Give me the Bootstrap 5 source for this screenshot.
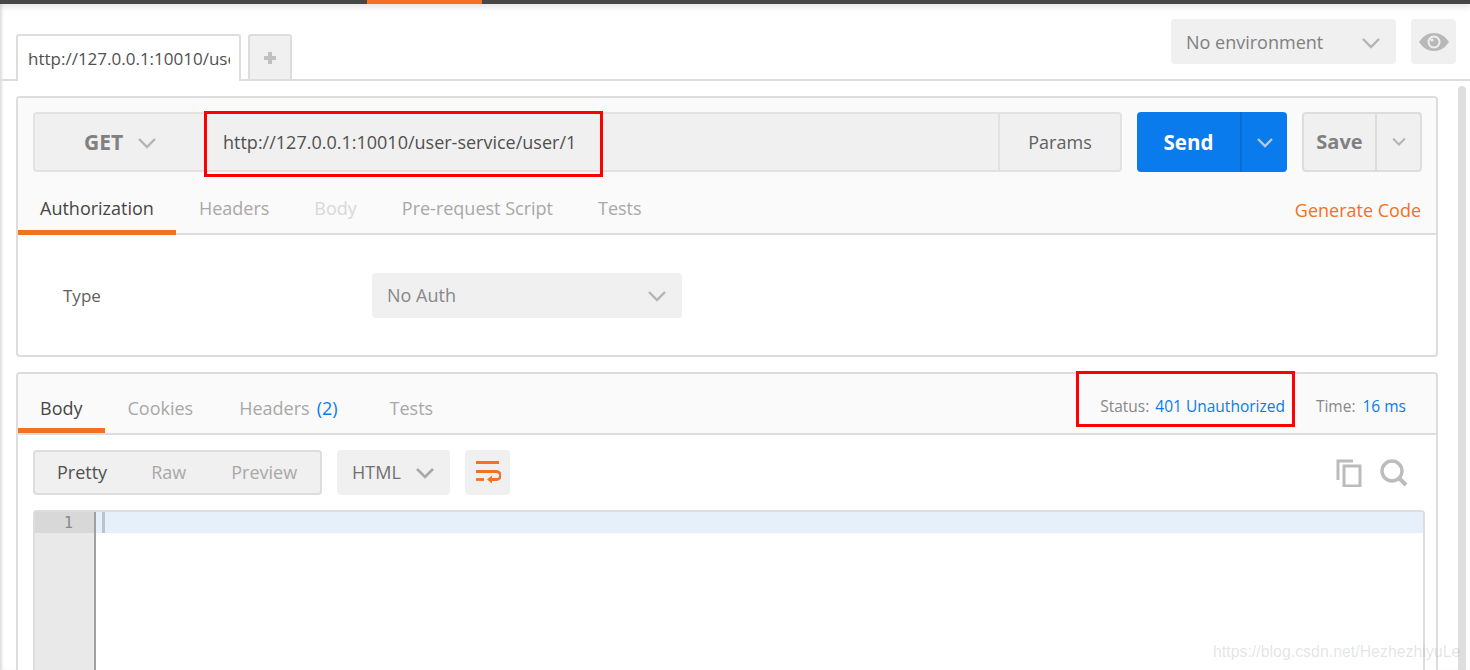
<!DOCTYPE html>
<html lang="en">
<head>
<meta charset="utf-8">
<title>Postman</title>
<link href="https://cdn.jsdelivr.net/npm/bootstrap@5.3.0/dist/css/bootstrap.min.css" rel="stylesheet">
<style>
html,body{height:670px;overflow:hidden;background:#fff}
body{font-family:"Open Sans",sans-serif;font-size:18px;color:#505050;line-height:1.3}
.appshell{height:670px;overflow:hidden;box-shadow:inset 3px 0 3px -1px #ddd}
.topstrip{height:4px;background:#464646;box-shadow:0 2px 6px rgba(0,0,0,.18)}
.topstrip-on{width:115px;margin-left:367px;background:#f47023}
.tabrow{height:77px;border-bottom:2px solid #ddd;padding-left:16px;padding-right:14px}
.reqtab{width:225px;height:47px;margin-bottom:-2px;padding:12px 9px 0 10px;background:#fff;border:2px solid #ddd;border-bottom:0;border-radius:3px 3px 0 0;font-size:17px;color:#505050;white-space:nowrap}
.reqtab-text{overflow:hidden;display:block}
.addtab{width:44px;height:45px;margin-left:7px;background:#f0f0f0;border:2px solid #ddd;border-bottom:0;border-radius:3px 3px 0 0}
.envselect{width:225px;height:45px;margin-top:15px;background:#f0f0f0;border-radius:4px;color:#808080;padding:2px 15px 0}
.eyebtn{width:45px;height:45px;margin-top:15px;margin-left:15px;background:#f0f0f0;border-radius:4px}
.panelbox{width:1422px;margin-left:16px;border:2px solid #ddd;border-radius:4px;background:#fff}
.reqpanel{margin-top:15px;height:261px}
.respanel{margin-top:15px;height:400px;position:relative}
.panelhead{background:#fafafa;border-radius:3px 3px 0 0;border-bottom:2px solid #ddd}
.reqhead{height:137px;padding:14px 14px 0 15px}
.urlgroup{width:1089px;height:60px;background:#f0f0f0;border:2px solid #e2e2e2;border-radius:4px}
.methodcell{width:170px;padding:2px 0 0 49px;font-weight:700;font-size:21px;color:#808080;gap:14px}
.urlcell{flex:1;position:relative;padding:2px 0 0 18px;color:#505050;font-size:18px}
.redframe{position:absolute;border:3px solid #f00;pointer-events:none}
.urlframe{left:-1px;top:-3px;width:399px;height:66px}
.paramscell{width:122px;border-left:2px solid #e2e2e2;justify-content:center;color:#606060;padding-top:2px}
.sendbtn{width:150px;height:60px;margin-left:15px;background:#097bed;border-radius:4px;color:#fff;font-weight:700;font-size:20.5px}
.sendlabel{width:105px;border-right:2px solid #0a6ccf}
.savebtn{width:120px;height:60px;margin-left:15px;background:#f0f0f0;border:2px solid #ddd;border-radius:4px;color:#808080;font-weight:700;font-size:20px}
.savelabel{width:73px;border-right:2px solid #ddd}
.tabline{height:63px;position:relative;margin-left:-15px;margin-right:-14px}
.tabitem{position:relative;height:100%;display:flex;align-items:center;color:#a8a8a8;padding-bottom:3px}
.tabline .tabitem{padding-top:14px}
.tabitem.tabon{color:#464646}
.tabitem.tabon::after{content:"";position:absolute;left:0;right:0;bottom:0;height:5px;background:#f47023}
.tabfaint{color:#d8d8d8}
.gencode{color:#f47023;position:absolute;right:15px;top:27px}
.authbody{height:120px;padding:38px 0 0 45px}
.authlabel{width:309px;color:#606060;font-size:17px}
.authselect{width:310px;height:45px;background:#f0f0f0;border-radius:4px;color:#888;padding:0 15px}
.reshead{height:61px}
.statusline{font-size:15.5px;color:#888}
.statusline b{font-weight:400;color:#097bed}
.statusframe{left:1058px;top:-3px;width:219px;height:56px}
.resbar{height:75px;padding:15px 15px 0}
.prettygroup{width:289px;height:45px;background:#f0f0f0;border:2px solid #ddd;border-radius:4px;padding-left:22px;color:#a8a8a8}
.langselect{width:113px;height:45px;margin-left:15px;background:#f0f0f0;border-radius:4px;color:#707070;padding:0 15px}
.wrapbtn{width:45px;height:45px;margin-left:15px;background:#f0f0f0;border-radius:4px}
.editorbox{width:1392px;margin-left:15px;height:300px;border:2px solid #ddd;border-bottom:0;border-radius:4px 4px 0 0}
.gutter{width:61px;background:#e9e9e9;border-right:2px solid #a0a0a0}
.gutnum{height:21px;background:#d8d8d8;font-family:"DejaVu Sans Mono","Liberation Mono",monospace;font-size:15px;line-height:23px;color:#888;text-align:right;padding-right:21px}
.activeline{height:21px;background:#e6f0fb;padding-left:6px}
.cursorbar{width:3px;height:21px;background:#b8c4d0}
.scrollthumb{position:absolute;left:1458px;top:86px;width:8px;height:584px;background:#dedede;border-radius:4px 4px 0 0}
.watermark{position:absolute;left:1213px;top:642px;font-family:"Liberation Sans",sans-serif;font-size:15.9px;line-height:20px;color:rgba(150,150,150,.26);white-space:nowrap}
</style>
</head>
<body>
<div class="appshell position-relative">
  <div class="topstrip d-flex"><div class="topstrip-on"></div></div>

  <div class="tabrow d-flex align-items-start">
    <div class="d-flex align-items-end align-self-end">
      <div class="reqtab"><span class="reqtab-text">http://127.0.0.1:10010/user-service/user/1</span></div>
      <div class="addtab d-flex align-items-center justify-content-center">
        <svg width="14" height="14" viewBox="0 0 14 14"><path d="M5 1h4v4h4v4H9v4H5V9H1V5h4z" fill="#c0c0c0"/></svg>
      </div>
    </div>
    <div class="envselect d-flex align-items-center justify-content-between ms-auto">
      <span>No environment</span>
      <svg width="20" height="12" viewBox="0 0 20 12"><path d="M2 2l8 8 8-8" fill="none" stroke="#b4b4b4" stroke-width="2.4"/></svg>
    </div>
    <div class="eyebtn d-flex align-items-center justify-content-center">
      <svg width="32" height="20" viewBox="0 0 32 20"><path d="M1 10C5 4 10 1 16 1s11 3 15 9c-4 6-9 9-15 9S5 16 1 10z" fill="#b8b8b8"/><circle cx="16" cy="10" r="6.5" fill="#f0f0f0"/><circle cx="16" cy="10" r="4.5" fill="#b8b8b8"/><circle cx="14" cy="8" r="1.6" fill="#f0f0f0"/></svg>
    </div>
  </div>

  <div class="panelbox reqpanel">
    <div class="panelhead reqhead">
      <div class="d-flex">
        <div class="urlgroup d-flex">
          <div class="methodcell d-flex align-items-center">
            <span>GET</span>
            <svg width="20" height="12" viewBox="0 0 20 12"><path d="M2 2l8 8 8-8" fill="none" stroke="#b4b4b4" stroke-width="2.4"/></svg>
          </div>
          <div class="urlcell d-flex align-items-center">
            <span>http://127.0.0.1:10010/user-service/user/1</span>
            <div class="redframe urlframe"></div>
          </div>
          <div class="paramscell d-flex align-items-center">Params</div>
        </div>
        <div class="sendbtn d-flex">
          <div class="sendlabel d-flex align-items-center justify-content-center">Send</div>
          <div class="flex-grow-1 d-flex align-items-center justify-content-center">
            <svg width="18" height="11" viewBox="0 0 18 11"><path d="M2 2l7 7 7-7" fill="none" stroke="#b9c6d4" stroke-width="2.4"/></svg>
          </div>
        </div>
        <div class="savebtn d-flex">
          <div class="savelabel d-flex align-items-center justify-content-center">Save</div>
          <div class="flex-grow-1 d-flex align-items-center justify-content-center">
            <svg width="16" height="10" viewBox="0 0 16 10"><path d="M2 1.5l6 6 6-6" fill="none" stroke="#b4b4b4" stroke-width="2"/></svg>
          </div>
        </div>
      </div>
      <div class="tabline d-flex">
        <div class="tabitem tabon px-4" style="padding-left:22px !important;padding-right:22px !important">Authorization</div>
        <div class="tabitem" style="margin-left:23px">Headers</div>
        <div class="tabitem tabfaint" style="margin-left:45px">Body</div>
        <div class="tabitem" style="margin-left:45px">Pre-request Script</div>
        <div class="tabitem" style="margin-left:45px">Tests</div>
        <div class="gencode">Generate Code</div>
      </div>
    </div>
    <div class="authbody d-flex align-items-start">
      <div class="authlabel" style="line-height:45px">Type</div>
      <div class="authselect d-flex align-items-center justify-content-between">
        <span>No Auth</span>
        <svg width="20" height="12" viewBox="0 0 20 12"><path d="M2 2l8 8 8-8" fill="none" stroke="#b4b4b4" stroke-width="2.4"/></svg>
      </div>
    </div>
  </div>

  <div class="panelbox respanel">
    <div class="panelhead reshead d-flex position-relative">
      <div class="tabitem tabon" style="padding:13px 22px 3px">Body</div>
      <div class="tabitem" style="margin-left:23px;padding-top:13px">Cookies</div>
      <div class="tabitem" style="margin-left:46px;padding-top:13px">Headers<span style="color:#097bed;margin-left:7px">(2)</span></div>
      <div class="tabitem" style="margin-left:52px;padding-top:13px">Tests</div>
      <div class="statusline d-flex align-items-center ms-auto" style="padding-top:6px;padding-right:30px">
        <span>Status:</span><b style="margin-left:6px">401 Unauthorized</b>
        <span style="margin-left:31px">Time:</span><b style="margin-left:7px">16 ms</b>
      </div>
      <div class="redframe statusframe"></div>
    </div>
    <div class="resbar d-flex">
      <div class="prettygroup d-flex align-items-center">
        <span style="color:#505050">Pretty</span>
        <span style="margin-left:44px">Raw</span>
        <span style="margin-left:45px">Preview</span>
      </div>
      <div class="langselect d-flex align-items-center justify-content-between">
        <span>HTML</span>
        <svg width="20" height="12" viewBox="0 0 20 12"><path d="M2 2l8 8 8-8" fill="none" stroke="#a8a8a8" stroke-width="2.6"/></svg>
      </div>
      <div class="wrapbtn d-flex align-items-center justify-content-center">
        <svg width="26" height="24" viewBox="0 0 26 24" fill="none"><path d="M1 1.500h23M1 10.500h20.500a3.500 3.500 0 0 1 0 8H16" stroke="#f47023" stroke-width="2.800"/><path d="M1 18.500h8" stroke="#f47023" stroke-width="2.800"/><path d="M12 18.500l5-4v8z" fill="#f47023"/></svg>
      </div>
      <div class="d-flex align-items-center ms-auto" style="gap:17px;padding-right:13px;height:45px">
        <svg width="28" height="28" viewBox="0 0 28 28" fill="none" stroke="#bcbcbc" stroke-width="3"><path d="M18 2H3v19"/><rect x="9" y="7" width="16" height="20"/></svg>
        <svg width="28" height="28" viewBox="0 0 28 28" fill="none" stroke="#bcbcbc"><circle cx="12" cy="12" r="10" stroke-width="3.400"/><path d="M19 19l7 7" stroke-width="4"/></svg>
      </div>
    </div>
    <div class="editorbox d-flex">
      <div class="gutter"><div class="gutnum">1</div></div>
      <div class="flex-grow-1"><div class="activeline"><div class="cursorbar"></div></div></div>
    </div>
  </div>

  <div class="scrollthumb"></div>
  <div class="watermark">https://blog.csdn.net/HezhezhiyuLe</div>
</div>
</body>
</html>
